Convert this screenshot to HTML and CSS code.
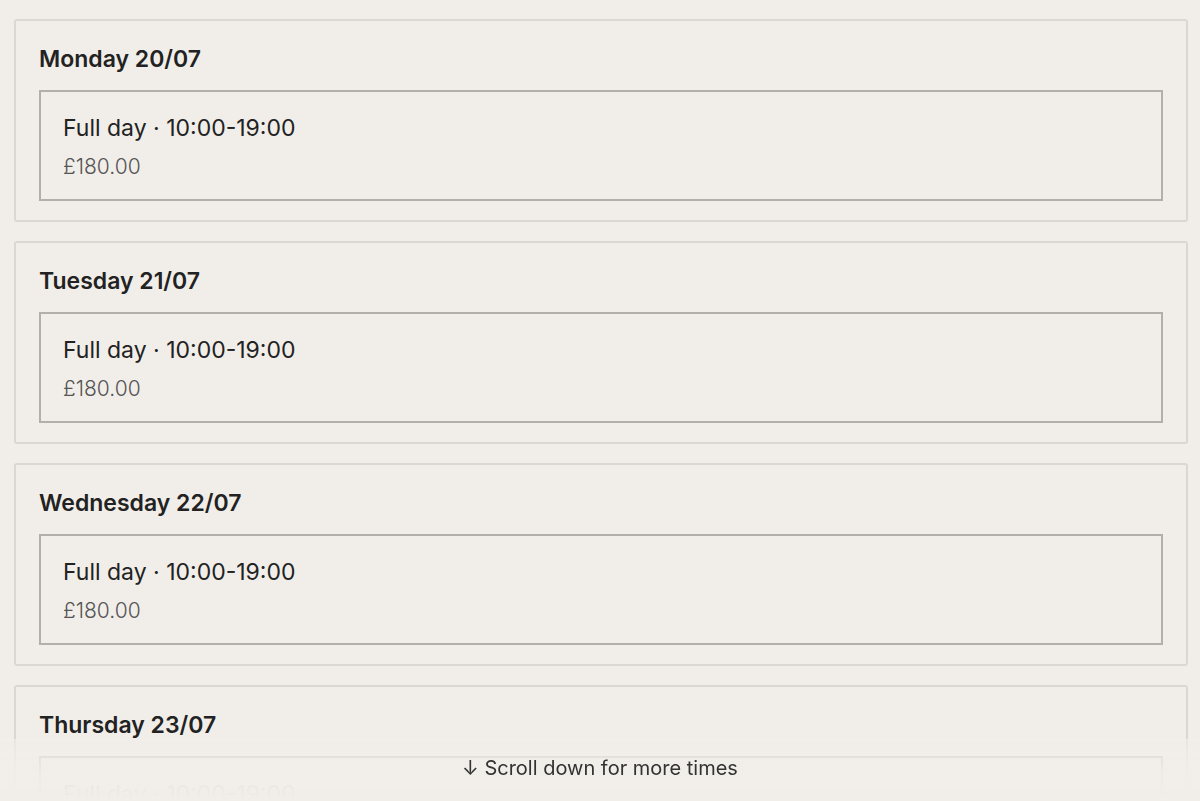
FILE: index.html
```html
<!DOCTYPE html>
<html lang="en">
<head>
    <meta charset="UTF-8">
    <meta name="viewport" content="width=device-width, initial-scale=1.0">
    <title>Available times</title>
    <link rel="stylesheet" href="styles.css">
</head>
<body>
    <div class="schedule">
        <div class="day-card">
            <h3 class="day-title">Monday 20/07</h3>
            <div class="slot">
                <p class="slot-time">Full day · 10:00-19:00</p>
                <p class="slot-price">£180.00</p>
            </div>
        </div>

        <div class="day-card">
            <h3 class="day-title">Tuesday 21/07</h3>
            <div class="slot">
                <p class="slot-time">Full day · 10:00-19:00</p>
                <p class="slot-price">£180.00</p>
            </div>
        </div>

        <div class="day-card">
            <h3 class="day-title">Wednesday 22/07</h3>
            <div class="slot">
                <p class="slot-time">Full day · 10:00-19:00</p>
                <p class="slot-price">£180.00</p>
            </div>
        </div>

        <div class="day-card">
            <h3 class="day-title">Thursday 23/07</h3>
            <div class="slot">
                <p class="slot-time">Full day · 10:00-19:00</p>
                <p class="slot-price">£180.00</p>
            </div>
        </div>

        <div class="day-card">
            <h3 class="day-title">Friday 24/07</h3>
            <div class="slot">
                <p class="slot-time">Full day · 10:00-19:00</p>
                <p class="slot-price">£180.00</p>
            </div>
        </div>
    </div>

    <!-- fade at the bottom of the list -->
    <div class="scroll-hint">
        <span>↓ Scroll down for more times</span>
    </div>
</body>
</html>
```

FILE: styles.css
```css
body {
    margin: 0;
    background: #f1eee9;
    font-family: Inter, 'Noto Sans', sans-serif;
    color: #222;
}

.schedule {
    height: 100vh;
    overflow-y: auto;
    scrollbar-width: none;
    box-sizing: border-box;
    padding: 19px 12px 0 14px;
    display: flex;
    flex-direction: column;
    gap: 19px;
}

.day-card {
    flex-shrink: 0;
    border: 2px solid #dbd8d3;
    border-radius: 3px;
    padding: 23px 23px 19px;
}

.day-title {
    margin: 0 0 16px;
    font-size: 23px;
    line-height: 30px;
    font-weight: 600;
    color: #222;
}

.slot {
    border: 2px solid #b3b0ab;
    padding: 21px 22px 18px;
}

.slot-time {
    margin: 0;
    font-size: 23px;
    line-height: 30px;
    color: #222;
}

.slot-price {
    margin: 10px 0 0;
    font-size: 21px;
    line-height: 28px;
    font-weight: 300;
    color: #555;
}

/* Scroll hint */
.scroll-hint {
    position: fixed;
    left: 0;
    right: 0;
    bottom: 0;
    height: 62px;
    display: flex;
    justify-content: center;
    align-items: flex-start;
    padding-top: 17px;
    box-sizing: border-box;
    background: linear-gradient(to bottom, rgba(241, 238, 233, 0.6), rgba(241, 238, 233, 0.95) 55%, #f1eee9);
    font-size: 20px;
    color: #333;
}
```
